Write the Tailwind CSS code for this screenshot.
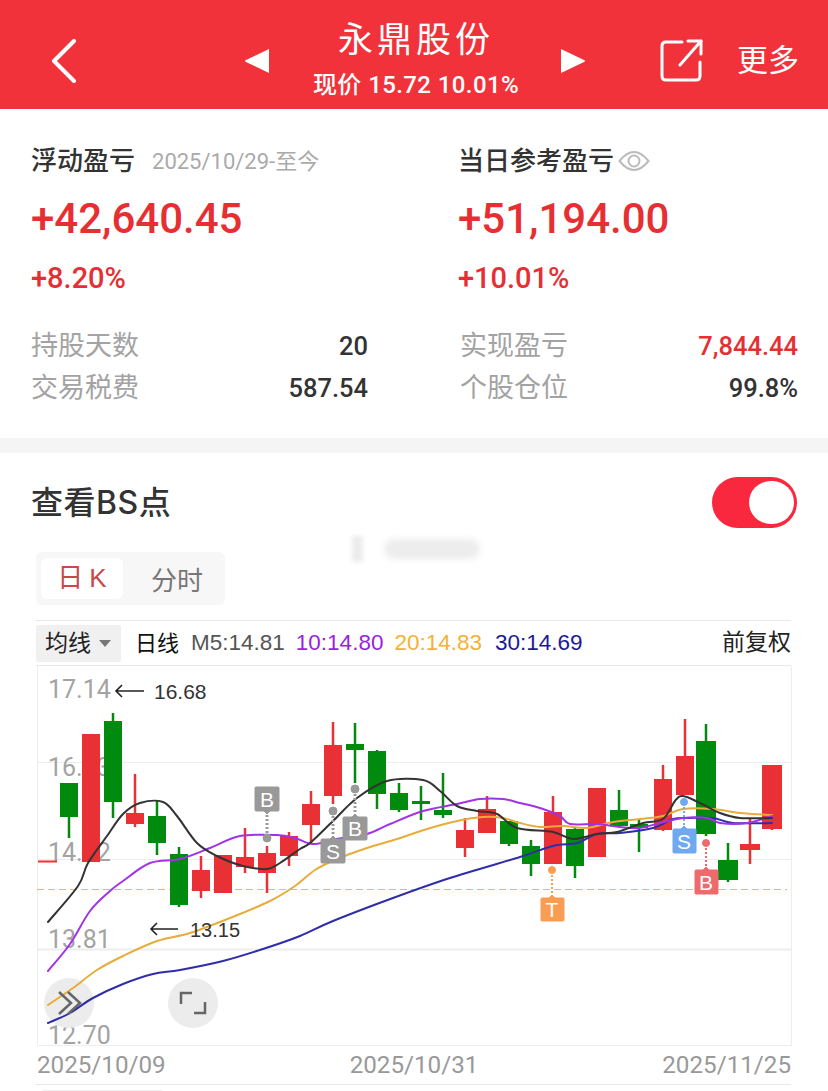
<!doctype html>
<html lang="zh">
<head>
<meta charset="utf-8">
<title>永鼎股份</title>
<script src="https://cdn.jsdelivr.net/npm/@tailwindcss/browser@4"></script>
</head>
<body class="bg-white w-[828px] h-[1091px] overflow-hidden relative font-['Roboto','Noto_Sans_CJK_SC',sans-serif]">

<!-- header -->
<header class="h-[109px] bg-[#f1323a] text-white flex items-center relative">
  <svg class="ml-[50px] mt-[12px] shrink-0" width="28" height="44" viewBox="0 0 28 44" fill="none" stroke="#fff" stroke-width="4" stroke-linecap="round" stroke-linejoin="round"><path d="M24 2 L4 22 L24 42"/></svg>
  <svg class="ml-[166px] mt-[12px] shrink-0" width="26" height="26" viewBox="0 0 26 26" fill="#fff"><path d="M25 1 V25 L2 14 Q0 13 2 12 Z"/></svg>
  <div class="w-[288px] ml-[2px] flex flex-col items-center self-start pt-[15px]">
    <div class="text-[35px] leading-[44px] tracking-[4px] font-['Noto_Sans_CJK_SC',sans-serif]">永鼎股份</div>
    <div class="text-[24px] leading-[30px] mt-[11px] tracking-[0.4px] font-medium">现价 15.72 10.01%</div>
  </div>
  <svg class="mt-[12px] shrink-0" width="26" height="26" viewBox="0 0 26 26" fill="#fff"><path d="M1 1 V25 L24 14 Q26 13 24 12 Z"/></svg>
  <svg class="ml-[74px] mt-[13px] shrink-0" width="44" height="44" viewBox="0 0 44 44" fill="none" stroke="#fff" stroke-width="3" stroke-linecap="round" stroke-linejoin="round"><path d="M22 3 H6 Q2 3 2 7 V37 Q2 41 6 41 H36 Q40 41 40 37 V23"/><path d="M28 2 H41 V15"/><path d="M41 2 L20 26"/></svg>
  <div class="ml-[33px] mt-[6px] text-[31px] leading-[36px] font-['Noto_Sans_CJK_SC',sans-serif]">更多</div>
</header>

<!-- profit summary -->
<section class="h-[329px] pt-[36px] pl-[31px] pr-[31px] grid grid-cols-[337px_340px] gap-x-[90px]">
  <div>
    <div class="flex items-center h-[32px]">
      <span class="text-[26px] mb-[6px] text-[#333] font-medium font-['Noto_Sans_CJK_SC',sans-serif]">浮动盈亏</span>
      <span class="ml-[17px] text-[22px] text-[#aaa]">2025/10/29-至今</span>
    </div>
    <div class="text-[42px] leading-[50px] mt-[17px] font-medium text-[#e62f33]">+42,640.45</div>
    <div class="text-[29px] leading-[32px] mt-[18px] font-medium text-[#e62f33]">+8.20%</div>
    <div class="mt-[31px] flex justify-between items-center h-[42px]">
      <span class="text-[27px] mb-[4px] text-[#a3a3a3] font-['Noto_Sans_CJK_SC',sans-serif]">持股天数</span>
      <span class="text-[25.5px] text-[#333] font-medium">20</span>
    </div>
    <div class="flex justify-between items-center h-[42px]">
      <span class="text-[27px] mb-[4px] text-[#a3a3a3] font-['Noto_Sans_CJK_SC',sans-serif]">交易税费</span>
      <span class="text-[25.5px] text-[#333] font-medium">587.54</span>
    </div>
  </div>
  <div>
    <div class="flex items-center h-[32px]">
      <span class="text-[26px] mb-[6px] text-[#333] font-medium font-['Noto_Sans_CJK_SC',sans-serif]">当日参考盈亏</span>
      <svg class="ml-[4px]" width="32" height="24" viewBox="0 0 32 24" fill="none" stroke="#bbb" stroke-width="2"><path d="M1.5 12 Q16 -6 30.5 12 Q16 30 1.5 12 Z"/><circle cx="16" cy="12" r="5.5"/></svg>
    </div>
    <div class="text-[42px] leading-[50px] mt-[17px] font-medium text-[#e62f33]">+51,194.00</div>
    <div class="text-[29px] leading-[32px] mt-[18px] font-medium text-[#e62f33]">+10.01%</div>
    <div class="mt-[31px] flex justify-between items-center h-[42px] pl-[2px]">
      <span class="text-[27px] mb-[4px] text-[#a3a3a3] font-['Noto_Sans_CJK_SC',sans-serif]">实现盈亏</span>
      <span class="text-[25.5px] text-[#e62f33] font-medium">7,844.44</span>
    </div>
    <div class="flex justify-between items-center h-[42px] pl-[2px]">
      <span class="text-[27px] mb-[4px] text-[#a3a3a3] font-['Noto_Sans_CJK_SC',sans-serif]">个股仓位</span>
      <span class="text-[25.5px] text-[#333] font-medium">99.8%</span>
    </div>
  </div>
</section>
<div class="h-[15px] bg-[#f5f5f5]"></div>

<!-- BS points -->
<section class="pt-[24px] relative">
  <div class="pl-[31px] pr-[31px] flex justify-between items-center h-[51px]">
    <h2 class="text-[32px] tracking-[0.5px] text-[#333] font-medium font-['Inter','Noto_Sans_CJK_SC',sans-serif]">查看BS点</h2>
    <div class="w-[85px] h-[51px] rounded-full bg-[#f9283f] flex items-center justify-end pr-[3px]">
      <div class="w-[45px] h-[43px] rounded-full bg-white"></div>
    </div>
  </div>
  <!-- blurred toast left over in the capture -->
  <div class="absolute left-[352px] top-[83px] w-[11px] h-[26px] bg-[#ececec] blur-[2px]"></div>
  <div class="absolute left-[384px] top-[86px] w-[96px] h-[20px] bg-[#ececec] rounded-full blur-[3px]"></div>

  <div class="ml-[36px] mt-[24px] w-[189px] h-[53px] bg-[#f7f7f7] rounded-[6px] flex items-center pl-[5px]">
    <div class="w-[82px] h-[41px] bg-white rounded-[6px] flex items-center justify-center text-[26px] text-[#c9484a] font-['Liberation_Sans','Noto_Sans_CJK_SC',sans-serif] gap-[6px]"><span>日</span><span>K</span></div>
    <div class="ml-[28px] text-[26px] text-[#777] font-['Noto_Sans_CJK_SC',sans-serif]">分时</div>
  </div>

  <div class="ml-[36px] mt-[15px] w-[755px] h-[46px] border-y border-[#e8e8e8] flex items-center font-['Liberation_Sans','Noto_Sans_CJK_SC',sans-serif]">
    <div class="w-[85px] h-[37px] bg-[#f0f0f0] rounded-[2px] flex items-center pl-[9px] gap-[8px]">
      <span class="text-[23px] mb-[4px] text-[#222] font-['Noto_Sans_CJK_SC',sans-serif]">均线</span>
      <span class="w-0 h-0 border-x-[6px] border-x-transparent border-t-[7px] border-t-[#777]"></span>
    </div>
    <span class="ml-[14px] mb-[4px] text-[22px] text-[#111] font-['Noto_Sans_CJK_SC',sans-serif]">日线</span>
    <span class="ml-[12px] text-[22.5px] text-[#555]">M5:14.81</span>
    <span class="ml-[11px] text-[22.5px] text-[#9a1fe0]">10:14.80</span>
    <span class="ml-[11px] text-[22.5px] text-[#f2b233]">20:14.83</span>
    <span class="ml-[13px] text-[22.5px] text-[#1d1a96]">30:14.69</span>
    <span class="ml-auto mb-[6px] text-[23px] text-[#222] font-['Noto_Sans_CJK_SC',sans-serif]">前复权</span>
  </div>

  <!-- kline chart, drawn in page coordinates -->
  <svg id="chart" class="block overflow-visible" width="828" height="380" viewBox="0 665 828 380">
    <g stroke="#ededed" fill="none">
      <path d="M37.5 665 V1044.5 H791.5 V665"/>
      <path d="M37 761.5 H791 M37 858.5 H791"/>
      <path d="M37 948.5 H791" stroke-width="2"/>
    </g>
    <path d="M37 888.5 H787" stroke="#eeb27f" stroke-dasharray="7 4" fill="none"/>
    <g font-family="Roboto, sans-serif" font-size="25" fill="#a3a3a3">
      <text x="48" y="697">17.14</text>
      <text x="48" y="775">16.03</text>
      <text x="48" y="860">14.92</text>
      <text x="48" y="947">13.81</text>
      <text x="48" y="1043">12.70</text>
    </g>
    <path d="M38 860.5 H57" stroke="#e33" stroke-width="2"/>
    <circle cx="69" cy="1002" r="25" fill="#ececec"/>
    <circle cx="193" cy="1002" r="25" fill="#ececec"/>
    <g id="candles"></g>
    <g id="lines" fill="none" stroke-width="2" stroke-linecap="round" stroke-linejoin="round"></g>

    <!-- high and low callouts -->
    <g font-family="'Liberation Sans', sans-serif" fill="#333">
      <text x="154" y="698" font-size="21">16.68</text>
      <text x="190" y="936" font-size="20">13.15</text>
    </g>
    <g fill="none" stroke="#222" stroke-width="1.6">
      <path d="M116 690 H144 M122 684 L116 690 L122 696"/>
      <path d="M151 928 H178 M157 922 L151 928 L157 934"/>
    </g>

    <!-- BS markers -->
    <g font-family="'Liberation Sans', sans-serif" font-size="21" text-anchor="middle" fill="#fff">
      <g fill="#999" stroke="#999">
        <path d="M267 814 V832" stroke-width="3" stroke-dasharray="2 2" fill="none"/>
        <circle cx="267" cy="837" r="4"/>
        <path d="M256 786 H278 Q279 786 279 787 V809 Q279 810 278 810 H270 L267 813 L264 810 H256 Q255 810 255 809 V787 Q255 786 256 786 Z"/>
        <path d="M333 815 V835" stroke-width="3" stroke-dasharray="2 2" fill="none"/>
        <circle cx="333" cy="810" r="4"/>
        <path d="M322 838 H330 L333 835 L336 838 H344 Q345 838 345 839 V861 Q345 862 344 862 H322 Q321 862 321 861 V839 Q321 838 322 838 Z"/>
        <path d="M355 793 V813" stroke-width="3" stroke-dasharray="2 2" fill="none"/>
        <circle cx="355" cy="788" r="4"/>
        <path d="M344 816 H352 L355 813 L358 816 H366 Q367 816 367 817 V838 Q367 839 366 839 H344 Q343 839 343 838 V817 Q343 816 344 816 Z"/>
      </g>
      <g fill="#f99d53" stroke="#f99d53">
        <path d="M552 874 V894" stroke-width="2" stroke-dasharray="2 2" fill="none"/>
        <circle cx="552" cy="869" r="3.5"/>
        <path d="M542 897 H549 L552 894 L555 897 H563 Q564 897 564 898 V919 Q564 920 563 920 H542 Q541 920 541 919 V898 Q541 897 542 897 Z"/>
      </g>
      <g fill="#6fa9ef" stroke="#6fa9ef">
        <path d="M684 806 V825" stroke-width="2" stroke-dasharray="2 2" fill="none"/>
        <circle cx="684" cy="801" r="3.5"/>
        <path d="M674 828 H681 L684 825 L687 828 H695 Q696 828 696 829 V851 Q696 852 695 852 H674 Q673 852 673 851 V829 Q673 828 674 828 Z"/>
      </g>
      <g fill="#ee6a6c" stroke="#ee6a6c">
        <path d="M706 847 V866" stroke-width="2" stroke-dasharray="2 2" fill="none"/>
        <circle cx="706" cy="842" r="3.5"/>
        <path d="M696 869 H703 L706 866 L709 869 H717 Q718 869 718 870 V892 Q718 893 717 893 H696 Q695 893 695 892 V870 Q695 869 696 869 Z"/>
      </g>
      <text x="267" y="806">B</text>
      <text x="333" y="858">S</text>
      <text x="355" y="835">B</text>
      <text x="552" y="916">T</text>
      <text x="684" y="848">S</text>
      <text x="706" y="889">B</text>
    </g>

    <!-- chart buttons -->
    <g fill="none" stroke="#666" stroke-width="2.5">
      <path d="M59 991 L71 1002 L59 1013 M68 991 L80 1002 L68 1013"/>
      <path d="M181 1003 V992 H192 M205 1001 V1012 H194"/>
    </g>
  </svg>

  <div class="ml-[37px] w-[754px] h-[38px] flex justify-between items-center text-[24.2px] text-[#999] font-['Roboto',sans-serif]">
    <span>2025/10/09</span>
    <span>2025/10/31</span>
    <span>2025/11/25</span>
  </div>
  <div class="ml-[36px] w-[755px] border-t border-[#e8e8e8] pt-[5px] pl-[6px]">
    <div class="w-[120px] h-[4px] bg-[#f0f0f0]"></div>
  </div>
</section>

<script>
  // x, top, bottom, wick top, wick bottom, half width
  var red = [
    [91,733,861,733,861,9],[135,812,823,773,826,9],[201,869,890,855,897,9],[223,854,892,854,892,9],
    [245,856,866,827,872,9],[267,852,872,845,892,9],[289,835,855,831,865,9],[311,803,824,790,843,9],
    [333,744,795,721,803,9],[465,829,847,817,856,9],[487,808,832,795,832,9],[553,811,863,795,863,9],
    [597,787,856,787,856,9],[663,778,829,764,830,9],[685,755,794,718,794,9],[750,843,849,818,863,10],
    [772,764,828,764,829,10]
  ];
  var green = [
    [69,782,816,782,837,9],[113,720,801,712,817,9],[157,815,842,800,854,9],[179,853,904,846,906,9],
    [355,743,749,722,782,9],[377,750,793,749,808,9],[399,792,809,782,811,9],[421,800,803,785,819,9],
    [443,809,814,772,817,9],[509,820,843,820,845,9],[531,845,863,839,875,9],[575,828,865,827,877,9],
    [619,809,825,789,825,9],[639,823,827,818,851,9],[706,740,833,723,835,10],[728,859,879,842,881,10]
  ];
  var out = '';
  function candle(c, color) {
    out += '<path d="M' + c[0] + ' ' + c[3] + ' V' + c[4] + '" stroke="' + color + '" stroke-width="2.5"/>';
    out += '<rect x="' + (c[0] - c[5]) + '" y="' + c[1] + '" width="' + (c[5] * 2) + '" height="' + (c[2] - c[1]) + '" fill="' + color + '"/>';
  }
  green.forEach(function (c) { candle(c, '#008a0e'); });
  red.forEach(function (c) { candle(c, '#e83035'); });
  document.getElementById('candles').innerHTML = out;

  var ma = {
    '#2f2ea8': [48,1022,70,1012,93,997,123,983,153,973,180,969,223,960,263,948,300,935,333,920,393,897,450,877,520,856,553,845,577,842,597,833,620,832,653,827,673,818,690,817,713,817,733,822,772,822],
    '#e8ac3c': [48,1004,73,987,97,969,123,955,157,940,190,932,230,917,270,900,295,885,315,869,337,858,367,847,397,838,427,828,457,820,483,816,503,817,520,822,540,826,563,825,587,827,613,821,640,818,663,815,683,808,713,808,740,812,772,814],
    '#a033e8': [48,970,70,943,90,910,110,890,123,880,150,862,180,858,210,847,240,835,277,834,295,837,313,843,337,838,367,833,390,823,423,810,457,803,480,798,503,798,520,802,540,807,560,815,570,823,597,823,620,826,640,827,660,822,683,817,707,817,720,822,747,822,772,815],
    '#333333': [48,921,78,885,88,862,107,835,123,813,140,802,163,801,177,815,197,842,217,855,243,865,267,868,280,862,300,848,310,842,333,820,357,797,387,780,423,779,440,790,457,805,477,810,497,813,517,827,553,831,573,838,597,833,617,831,643,822,663,818,675,800,683,795,700,802,720,812,740,817,772,817]
  };
  var lines = '';
  Object.keys(ma).forEach(function (color) {
    var p = ma[color], d = 'M' + p[0] + ' ' + p[1];
    // catmull-rom through the points
    for (var i = 0; i < p.length - 2; i += 2) {
      var x0 = p[i - 2] === undefined ? p[i] : p[i - 2], y0 = p[i - 1] === undefined ? p[i + 1] : p[i - 1];
      var x3 = p[i + 4] === undefined ? p[i + 2] : p[i + 4], y3 = p[i + 5] === undefined ? p[i + 3] : p[i + 5];
      d += ' C' + (p[i] + (p[i + 2] - x0) / 6) + ' ' + (p[i + 1] + (p[i + 3] - y0) / 6) + ' ' +
        (p[i + 2] - (x3 - p[i]) / 6) + ' ' + (p[i + 3] - (y3 - p[i + 1]) / 6) + ' ' + p[i + 2] + ' ' + p[i + 3];
    }
    lines += '<path d="' + d + '" stroke="' + color + '"/>';
  });
  document.getElementById('lines').innerHTML = lines;
</script>
</body>
</html>
